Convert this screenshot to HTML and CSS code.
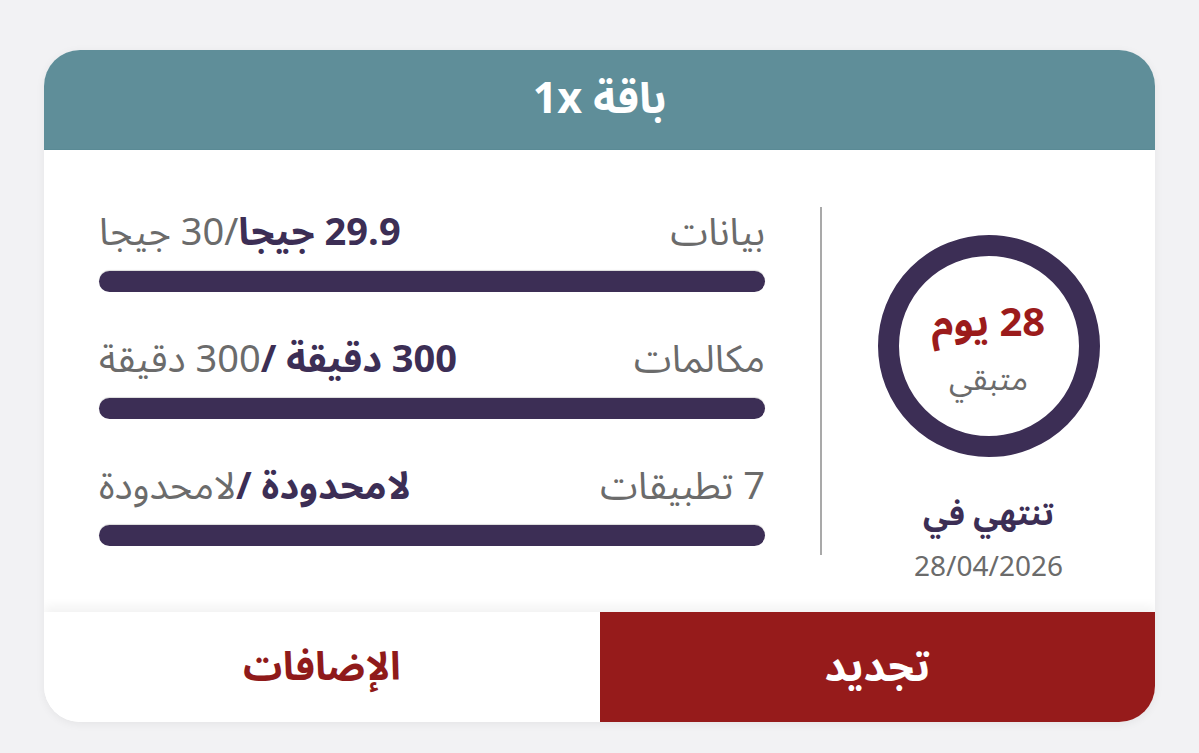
FILE: index.html
```html
<!DOCTYPE html>
<html lang="ar" dir="rtl">
<head>
<meta charset="utf-8">
<title>باقة 1x</title>
<link rel="stylesheet" href="styles.css">
</head>
<body>
<div class="card">
  <div class="card-header">باقة 1x</div>
  <div class="card-body">
    <div class="days-panel">
      <div class="ring">
        <div class="ring-days">28 يوم</div>
        <div class="ring-left">متبقي</div>
      </div>
      <div class="ends-label">تنتهي في</div>
      <div class="ends-date">28/04/2026</div>
    </div>
    <div class="divider"></div>
    <div class="usage">
      <div class="usage-row">
        <div class="usage-text">
          <span class="usage-label">بيانات</span>
          <span class="usage-value"><b>29.9 جيجا</b>/30 جيجا</span>
        </div>
        <div class="bar"></div>
      </div>
      <div class="usage-row">
        <div class="usage-text">
          <span class="usage-label">مكالمات</span>
          <span class="usage-value"><b>300 دقيقة /</b>300 دقيقة</span>
        </div>
        <div class="bar"></div>
      </div>
      <div class="usage-row">
        <div class="usage-text">
          <span class="usage-label">7 تطبيقات</span>
          <span class="usage-value"><b>لامحدودة /</b>لامحدودة</span>
        </div>
        <div class="bar"></div>
      </div>
    </div>
  </div>
  <div class="card-footer">
    <button class="btn btn-renew">تجديد</button>
    <button class="btn btn-addons">الإضافات</button>
  </div>
</div>
</body>
</html>
```
FILE: styles.css
```css
* { box-sizing: border-box; }
html, body { margin: 0; padding: 0; }
body {
  background: #f2f2f4;
  font-family: "Noto Sans Arabic", "Noto Kufi Arabic", "DejaVu Sans", sans-serif;
  padding: 50px 44px 0 44px;
  width: 1199px;
  height: 753px;
  overflow: hidden;
}
.card {
  width: 1111px;
  height: 672px;
  background: #fff;
  border-radius: 36px;
  overflow: hidden;
  display: flex;
  flex-direction: column;
  box-shadow: 0 2px 10px rgba(0,0,0,0.06);
}
.card-header {
  height: 100px;
  flex-shrink: 0;
  background: #5f8e99;
  color: #fff;
  font-weight: 700;
  font-size: 43px;
  display: flex;
  align-items: center;
  justify-content: center;
  border-bottom: 1px solid #5a8a95;
}
.card-body {
  height: 462px;
  flex-shrink: 0;
  display: flex;
  flex-direction: row;
}
.days-panel {
  width: 333px;
  flex-shrink: 0;
  display: flex;
  flex-direction: column;
  align-items: center;
  padding-top: 85px;
}
.divider {
  width: 2px;
  flex-shrink: 0;
  margin: 57px 0;
  background: #a9a9a9;
}
.ring {
  width: 222px;
  height: 222px;
  flex-shrink: 0;
  border-radius: 50%;
  border: 21px solid #3c2e55;
  display: flex;
  flex-direction: column;
  align-items: center;
  justify-content: center;
  gap: 12px;
  padding-top: 8px;
}
.ring-days {
  color: #9b1b1b;
  font-weight: 700;
  font-size: 40px;
  line-height: 48px;
}
.ring-left {
  color: #6b6b6b;
  font-size: 32px;
  line-height: 40px;
}
.ends-label {
  margin-top: 36px;
  color: #3c2e55;
  font-weight: 700;
  font-size: 32px;
  line-height: 44px;
}
.ends-date {
  color: #6b6b6b;
  font-size: 28px;
  line-height: 36px;
  margin-top: 13px;
}
.usage {
  flex: 1;
  padding: 63px 55px 0 55px;
  display: flex;
  flex-direction: column;
  gap: 48px;
}
.usage-row {
  display: flex;
  flex-direction: column;
  gap: 18px;
}
.usage-text {
  height: 40px;
  display: flex;
  justify-content: space-between;
  align-items: center;
  font-size: 38px;
  line-height: 40px;
  color: #6b6b6b;
  white-space: nowrap;
}
.usage-value b {
  color: #3c2e55;
  font-weight: 700;
}
.bar {
  height: 21px;
  border-radius: 11px;
  background: #3c2e55;
  box-shadow: 0 -1px 1px rgba(0,0,0,0.15);
}
.card-footer {
  flex: 1;
  display: flex;
  box-shadow: 0 -6px 10px rgba(0,0,0,0.05);
}
.btn {
  flex: 1;
  border: 0;
  margin: 0;
  font-family: inherit;
  font-weight: 700;
  display: flex;
  align-items: center;
  justify-content: center;
  cursor: pointer;
}
.btn-renew {
  background: #961b1b;
  color: #fff;
  font-size: 42px;
}
.btn-addons {
  background: #fff;
  color: #8f1a1a;
  font-size: 39px;
}
```
